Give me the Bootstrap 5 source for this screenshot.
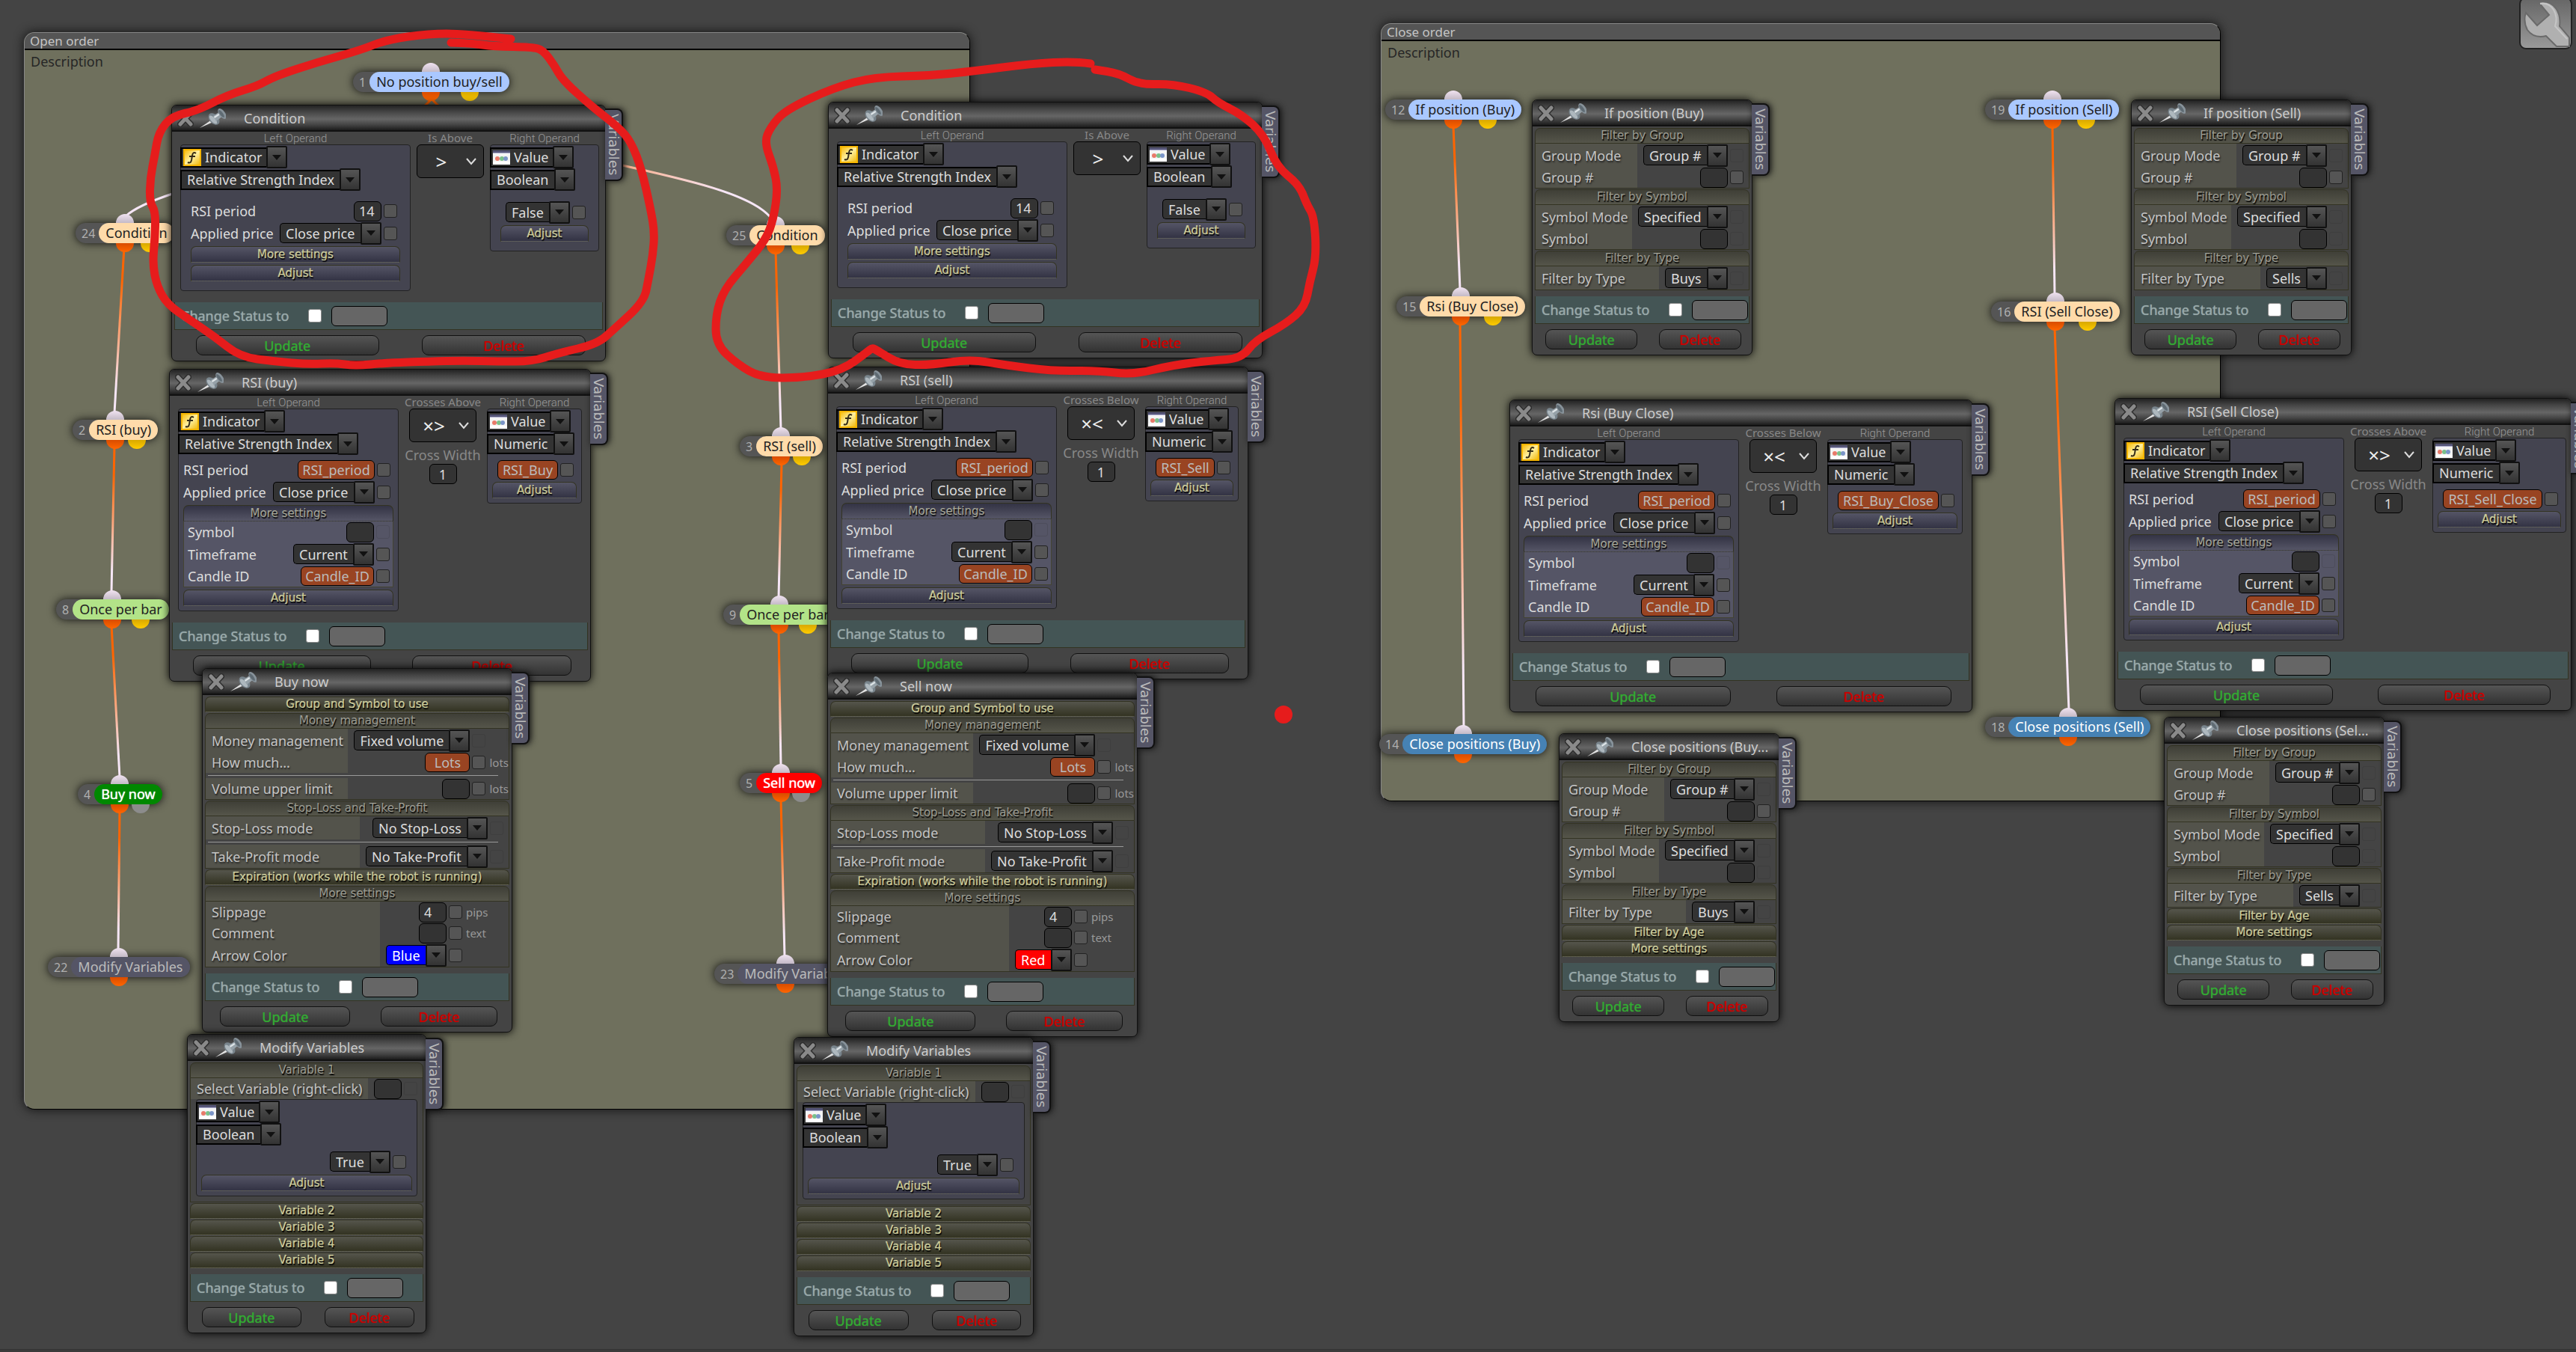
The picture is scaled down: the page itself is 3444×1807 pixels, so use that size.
<!DOCTYPE html>
<html lang="en">
<head>
<meta charset="utf-8">
<meta name="viewport" content="width=device-width, initial-scale=1">
<title>Strategy builder</title>
<link href="https://cdn.jsdelivr.net/npm/bootstrap@5.3.0/dist/css/bootstrap.min.css" rel="stylesheet">
<style>
  body { background: #444; color: #ddd; font: 18px/24px "Noto Sans", "Open Sans", sans-serif; }
  .board { min-height: 100vh; overflow: hidden; }
  .board::after { content: ""; position: absolute; inset: auto 0 0 0; height: 4px; background: #3b3b3b; border-top: 1px solid #333; }
  .layer { inset: 0; width: 100%; height: 100%; pointer-events: none; }
  .frame { background: #6f705d; border: 1px solid #000; border-top-color: #888; border-left-color: #888; border-radius: 14px 14px 0 14px; box-shadow: 0 0 14px #111; }
  .frame-head { height: 23px; background: #555; border-bottom: 2px solid #000; border-radius: 13px 13px 0 0; padding-left: 7px; font-size: 17px; line-height: 22px; color: #c4c4c4; }
  .frame-text { padding: 3px 8px; color: #262626; }

  .node { height: 27px; border-radius: 14px; background: #555; box-shadow: 0 0 12px #111; white-space: nowrap; }
  .node-id { padding: 0 5px 0 8px; font-size: 16px; color: #b0b0b0; }
  .node-name { height: 27px; line-height: 26px; padding: 0 9px; border-radius: 14px; color: #222; }
  .kind-block .node-name { background: #aac8ff; }
  .kind-test .node-name { background: #ffdbaa; }
  .kind-once .node-name { background: #b2e388; }
  .kind-buy .node-name { background: #080; color: #fff; text-shadow: 0 0 1px #fff; }
  .kind-sell .node-name { background: #f00; color: #fff; text-shadow: 0 0 1px #fff; }
  .kind-var .node-name { background: #556; color: #bbb; }
  .kind-close .node-name { background: #4682b4; color: #fff; }
  .port { width: 24px; height: 12px; margin-left: -12px; left: 50%; }
  .port-in { bottom: 100%; border-radius: 12px 12px 0 0; background: linear-gradient(#f0e2f0, #c4bac6); }
  .port-out { top: 100%; border-radius: 0 0 12px 12px; background: linear-gradient(#d84c00, #f60); }
  .port-alt { top: 100%; left: 75%; border-radius: 0 0 12px 12px; background: linear-gradient(#d8a800, #fc0); }
  .port-off { background: #8c8c8c; }

  .win { background: #444; border: 1px solid #111; border-radius: 7px; box-shadow: 0 0 12px #000; padding-bottom: 7px; }
  .win-head { height: 35px; border-bottom: 2px solid #111; border-radius: 6px 6px 0 0; padding: 0 8px 0 7px; background: linear-gradient(#222, #444 25%, #666 55%, #444 78%, #1c1c1c); color: #ccc; }
  .win-head svg { flex: none; }
  .win-title { margin-left: 24px; font-size: 18px; line-height: 34px; font-weight: 400; }
  .icon-btn { background: none; border: 0; padding: 0; line-height: 0; }
  .icon-btn + .icon-btn { margin-left: 7px; }
  .win-tab { left: 100%; top: 4px; height: 97px; width: 24px; border: 1px solid #111; border-width: 2px 2px 2px 0; border-radius: 0 8px 8px 0; background: #556; color: #bbb; box-shadow: 2px 0 8px #111; padding: 0; writing-mode: vertical-rl; font: 18px/21px "DejaVu Sans", sans-serif; }
  .win-body { padding: 2px 3px 0; }

  .fold { display: block; width: 100%; height: 21px; margin: 0 0 1px; padding: 0; border: 1px solid #332; border-bottom: 1px dotted #666650; border-radius: 7px 7px 0 0; font: 15px/19px "DejaVu Sans", sans-serif; text-align: center; background: linear-gradient(#55554c, #333322); color: #cc9; text-shadow: 1px 2px 1px #000, 0 0 1px #bb9; }
  .fold.is-open { margin: 0; background: linear-gradient(#3f3f37, #55554a); color: #9c9c92; border: 1px solid #333322; text-shadow: 1px 2px 1px #000; }
  .fold-cold { height: 22px; margin-bottom: 3px; background: linear-gradient(#556, #334); }
  .fold-cold.is-open { background: linear-gradient(#334, #556); color: #a8a898; border-bottom: 1px dotted #554; }
  .group-box { border: 1px solid #332; border-top: 0; margin-bottom: 1px; display: grid; grid-template-columns: 1fr auto; }
  .group-box.has-unit { grid-template-columns: 1fr auto auto; }
  .field-name { background: #53534b; color: #c4c4c4; padding-left: 8px; text-shadow: 1px 2px 2px #222; display: flex; align-items: center; line-height: 24px; white-space: nowrap; }
  .field-value { min-height: 28px; padding: 0 7px 0 8px; }
  .field-value .pick { height: 31px; }
  .has-unit .field-value { padding-right: 0; }
  .field-unit { color: #999; font-size: 15px; line-height: 20px; padding-left: 5px; min-width: 29px; }
  .unit-wide .field-unit { min-width: 62px; }
  .split { grid-column: 1 / -1; margin: 3px 14px 3px 3px; height: 1px; border: 0; background: #999; opacity: 1; }

  .pick { height: 30px; display: inline-flex; align-items: center; }
  .pick-face { height: 27px; background: #333; border: 1px solid #000; border-right: 0; border-radius: 5px 0 0 5px; display: flex; align-items: center; padding: 0 7px; }
  .pick-face select { appearance: none; background: none; border: 0; padding: 0; margin: 0; color: #ddd; font: inherit; line-height: 24px; outline: 0; }
  .pick-square .pick-face { border-radius: 0; border-width: 2px; }
  .pick-icon .pick-face { padding: 0 5px 0 2px; gap: 5px; }
  .pick-arrow { width: 28px; height: 30px; border: 2px solid #111; background: linear-gradient(#555, #333); display: flex; align-items: center; justify-content: center; border-radius: 2px; }
  .tone-blue .pick-face { background: #00f; }
  .tone-red .pick-face { background: #f00; }
  .tone-blue select, .tone-red select { color: #fff; }
  .entry { width: 37px; height: 27px; border: 1px solid #000; border-radius: 6px; background: #333; color: #ddd; padding: 0 6px; font: inherit; line-height: 24px; }
  .entry-var { height: 26px; background: #994422; color: #bbb; text-align: center; padding: 0; }
  .tick { appearance: none; width: 18px; height: 18px; margin: 0 0 0 3px; border: 1px solid #222; border-radius: 3px; background: #555; flex: none; }
  .tick:disabled { background: transparent; border-color: rgba(34, 34, 34, .15); }

  .caption { font: 300 15px/17px Roboto, sans-serif; color: #999; text-align: center; padding-top: 1px; height: 17px; }
  .caption-mid { font: 15px/17px "Noto Sans", sans-serif; color: #888; text-align: center; white-space: nowrap; }
  .operands { gap: 8px; padding: 0 8px; margin-top: -2px; }
  .left-side { width: 295px; flex: none; }
  .is-roomy .left-side { width: 308px; }
  .operand { background: #444450; border: 1px solid #222; border-radius: 4px; padding-top: 1px; }
  .operand .pick { margin-left: -1px; }
  .op-form { padding: 6px 6px 3px; }
  .is-roomy .op-form { padding: 13px 13px 9px; }
  .op-row { min-height: 28px; padding-right: 4px; }
  .op-row .pick { margin: 0; height: 31px; }
  .op-form > .fold { margin-top: 2px; }
  .op-form > .fold + .fold, .op-more + .fold { margin-top: 3px; }
  .op-more { background: #556; border: 1px solid #443; border-top: 0; padding-left: 5px; }
  .right-side .op-row { padding-left: 7px; justify-content: flex-end; }
  .compare { width: 90px; height: 45px; background: #333; border: 1px solid #000; border-radius: 6px; margin: 0 auto; }
  .compare select { appearance: none; width: 64px; border: 0; background: none; color: #eee; text-align: center; text-align-last: center; font: 26px/36px "Noto Sans", sans-serif; padding: 0; outline: 0; }
  .mid-label { color: #888; font-size: 18px; line-height: 22px; margin-top: 6px; white-space: nowrap; }
  .mid-side { flex: none; min-width: 90px; }
  .mid-side.is-cross { width: 102px; }

  .status { background: #455; border: 1px solid #332; border-top: 0; height: 37px; padding-left: 8px; margin-top: 8px; color: #9aa; overflow: hidden; }
  .status label { text-shadow: 0 0 1px #9aa; white-space: nowrap; }
  .status-tick { appearance: none; flex: none; width: 18px; height: 18px; margin: 0 13px 0 26px; background: #fff; border: 1px solid #888; border-radius: 3px; }
  .status-entry { flex: none; width: 75px; height: 27px; border: 1px solid #000; border-radius: 6px; background: #666; }
  .win-wide .status { margin-top: 15px; }
  .actions { padding: 7px 4% 0 5%; }
  .act { height: 27px; border: 1px solid #111; border-radius: 9px; background: linear-gradient(#555, #333); padding: 0; font: inherit; line-height: 24px; }
  .act-update { width: 47%; color: #3a3; text-shadow: 0 0 1px #3a3; }
  .act-delete { width: 42%; color: #c00; text-shadow: 0 0 1px #c00; }
  .inset-box { padding: 0 7px 7px; grid-column: 1 / -1; }
  .tools { top: -4px; right: 5px; width: 71px; height: 70px; border: 2px solid #222; border-radius: 9px; background: linear-gradient(#666, #999); padding: 0; }
</style>
</head>
<body>
<main class="board position-relative" id="board"></main>
<script src="https://cdn.jsdelivr.net/npm/bootstrap@5.3.0/dist/js/bootstrap.bundle.min.js"></script>
<script>
let serial = 0;
const nextId = () => 'f' + (++serial);

const closeIcon = `<svg width="22" height="22" viewBox="0 0 22 22"><path d="M4 4 L18 19 M18 4 L4 19" fill="none" stroke="#2e2e2e" stroke-width="8" stroke-linecap="round"/><path d="M4 4 L18 19 M18 4 L4 19" fill="none" stroke="#8a8a8a" stroke-width="5" stroke-linecap="round"/></svg>`;
const pinIcon = `<svg width="36" height="28" viewBox="0 0 36 28"><path d="M1 27 L17 16 L19 19 Z" fill="#e2e2e2"/><ellipse cx="20" cy="15" rx="6" ry="9" transform="rotate(-42 20 15)" fill="#78848c"/><ellipse cx="19" cy="16" rx="3" ry="7" transform="rotate(-42 19 16)" fill="#aeb8be"/><path d="M19 11 L28 5 L32 11 L23 18 Z" fill="#96a1a8"/><path d="M20 12 L29 6 L30 8 L21 14 Z" fill="#dfe5e8"/><ellipse cx="31" cy="8" rx="4" ry="8" transform="rotate(-36 31 8)" fill="#87929a"/><ellipse cx="30" cy="8" rx="2" ry="6" transform="rotate(-36 30 8)" fill="#5f6b73"/></svg>`;
const indicatorIcon = `<svg width="24" height="23" viewBox="0 0 24 23"><defs><linearGradient id="gold" x2="1" y2="1"><stop stop-color="#f8b800"/><stop offset=".5" stop-color="#fff0a0"/><stop offset="1" stop-color="#f0b400"/></linearGradient></defs><rect x="1" y="1" width="22" height="21" fill="url(#gold)" stroke="#f4b400" stroke-width="2"/><path d="M17 6 Q13 3 12 9 L11 15 Q10 20 6 18 M8 10 H16" fill="none" stroke="#332b18" stroke-width="2"/></svg>`;
const valueIcon = `<svg width="23" height="19" viewBox="0 0 23 19"><rect width="23" height="19" rx="1" fill="#f4f4f4"/><rect width="23" height="4" fill="#557"/><rect y="3" width="23" height="1" fill="#aac"/><circle cx="6" cy="11" r="3" fill="#e87a6a"/><circle cx="12" cy="11" r="3" fill="#79c08a"/><circle cx="17" cy="11" r="3" fill="#7b95c8"/><rect y="15" width="23" height="4" fill="#fff"/></svg>`;
const arrow = `<span class="pick-arrow"><svg width="12" height="7" viewBox="0 0 12 7"><path d="M0 0H12L6 7Z" fill="#111"/></svg></span>`;

const pick = (text, cls = '', icon = '', id = nextId()) =>
  `<span class="pick ${cls}"><span class="pick-face">${icon}<select id="${id}" aria-label="${text}"><option>${text}</option></select></span>${arrow}</span>`;
const tick = off => `<input class="tick" type="checkbox" aria-label="Use variable" ${off ? 'disabled' : ''}>`;
const entry = (id, v = '') => `<input class="entry" id="${id}" type="text" value="${v}">`;
const varEntry = (id, v, w) => `<input class="entry entry-var" id="${id}" type="text" value="${v}" style="width:${w}px">`;
const fold = (t, cls = '') => `<button type="button" class="fold ${cls}">${t}</button>`;

// control: ['pick', text, tone] | ['entry', value] | ['var', name, width]
const control = (c, id) => c[0] === 'pick' ? pick(c[1], c[2] || '', '', id) : c[0] === 'var' ? varEntry(id, c[1], c[2]) : entry(id, c[1]);

const opRow = (label, c, off) => {
  const id = nextId();
  return `<div class="op-row d-flex align-items-center">${label ? `<label class="me-auto pe-2 text-nowrap" for="${id}">${label}</label>` : ''}${control(c, id)}${tick(off)}</div>`;
};
const operand = (kind, type, form) => {
  const first = kind === 'Indicator' ? pick('Indicator', 'pick-square pick-icon', indicatorIcon) : pick('Value', 'pick-square pick-icon', valueIcon);
  return `<div class="operand d-flex flex-column align-items-start">${first}${pick(type, 'pick-square')}<div class="op-form w-100">${form}</div></div>`;
};

const leftForm = full => full
  ? opRow('RSI period', ['var', 'RSI_period', 103]) + opRow('Applied price', ['pick', 'Close price']) +
    fold('More settings', 'fold-cold is-open mb-0') +
    `<div class="op-more">${opRow('Symbol', ['entry', ''], true)}${opRow('Timeframe', ['pick', 'Current'])}${opRow('Candle ID', ['var', 'Candle_ID', 98])}</div>` +
    fold('Adjust', 'fold-cold')
  : opRow('RSI period', ['entry', '14']) + opRow('Applied price', ['pick', 'Close price']) + fold('More settings', 'fold-cold') + fold('Adjust', 'fold-cold');

const compareBody = o => {
  const wid = nextId();
  return `<div class="operands d-flex align-items-start ${o.full ? '' : 'is-roomy'}">
    <div class="left-side"><div class="caption">Left Operand</div>${operand('Indicator', 'Relative Strength Index', leftForm(o.full))}</div>
    <div class="mid-side ${o.full ? 'is-cross' : ''} text-center"><div class="caption-mid">${o.mode}</div>
      <div class="compare d-flex align-items-center"><select aria-label="${o.mode}"><option>${o.sign}</option></select><svg width="16" height="12" viewBox="0 0 16 12"><path d="M2 2 L8 9 L14 2" fill="none" stroke="#ddd" stroke-width="2"/></svg></div>
      ${o.full ? `<label class="mid-label" for="${wid}">Cross Width</label><div><input class="entry text-center" id="${wid}" type="text" value="1"></div>` : ''}
    </div>
    <div class="right-side"><div class="caption">Right Operand</div>${operand('Value', o.type, opRow('', o.right) + fold('Adjust', 'fold-cold'))}</div>
  </div>`;
};

// section: {t: title, rows: [[label, control, ghostTick, unit] | '-'], units: class}
const section = s => {
  if (!s.rows) return fold(s.t);
  const rows = s.rows.map(r => {
    if (r === '-') return '<hr class="split">';
    const id = nextId();
    return `<label class="field-name" for="${id}">${r[0]}</label><div class="field-value d-flex align-items-center justify-content-end">${control(r[1], id)}${tick(r[2])}</div>` +
      (s.units ? `<div class="field-unit d-flex align-items-center">${r[3] || ''}</div>` : '');
  }).join('');
  return fold(s.t, 'is-open') + `<div class="group-box ${s.units || ''}">${rows}${s.extra || ''}</div>`;
};

const filters = (type, more) => [
  {t: 'Filter by Group', rows: [['Group Mode', ['pick', 'Group #'], true], ['Group #', ['entry', '']]]},
  {t: 'Filter by Symbol', rows: [['Symbol Mode', ['pick', 'Specified'], true], ['Symbol', ['entry', ''], true]]},
  {t: 'Filter by Type', rows: [['Filter by Type', ['pick', type], true]]},
  ...(more ? [{t: 'Filter by Age'}, {t: 'More settings'}] : [])
];
const trade = (color, tone) => [
  {t: 'Group and Symbol to use'},
  {t: 'Money management', units: 'has-unit', rows: [['Money management', ['pick', 'Fixed volume'], true], ['How much...', ['var', 'Lots', 60], false, 'lots'], '-', ['Volume upper limit', ['entry', ''], false, 'lots']]},
  {t: 'Stop-Loss and Take-Profit', rows: [['Stop-Loss mode', ['pick', 'No Stop-Loss'], true], '-', ['Take-Profit mode', ['pick', 'No Take-Profit'], true]]},
  {t: 'Expiration (works while the robot is running)'},
  {t: 'More settings', units: 'has-unit unit-wide', rows: [['Slippage', ['entry', '4'], false, 'pips'], ['Comment', ['entry', ''], false, 'text'], ['Arrow Color', ['pick', color, tone]]]}
];
const modify = () => [
  {t: 'Variable 1', rows: [['Select Variable (right-click)', ['entry', ''], true]],
   extra: `<div class="inset-box">${operand('Value', 'Boolean', `<div class="d-flex justify-content-end pe-1">${opRow('', ['pick', 'True'])}</div>` + fold('Adjust', 'fold-cold'))}</div>`},
  {t: 'Variable 2'}, {t: 'Variable 3'}, {t: 'Variable 4'}, {t: 'Variable 5'}
];

const rsi = (mode, sign, name, w) => ({full: true, mode, sign, type: 'Numeric', right: ['var', name, w]});
const cond = {full: false, mode: 'Is Above', sign: '&gt;', type: 'Boolean', right: ['pick', 'False']};

const windows = [
  {x: 229, y: 140, w: 581, title: 'Condition', cmp: cond},
  {x: 1107, y: 136, w: 581, title: 'Condition', cmp: cond},
  {x: 226, y: 493, w: 564, title: 'RSI (buy)', cmp: rsi('Crosses Above', '×&gt;', 'RSI_Buy', 81)},
  {x: 1106, y: 490, w: 563, title: 'RSI (sell)', cmp: rsi('Crosses Below', '×&lt;', 'RSI_Sell', 79)},
  {x: 270, y: 893, w: 415, title: 'Buy now', parts: trade('Blue', 'tone-blue')},
  {x: 1106, y: 899, w: 415, title: 'Sell now', parts: trade('Red', 'tone-red')},
  {x: 250, y: 1382, w: 320, title: 'Modify Variables', parts: modify()},
  {x: 1061, y: 1386, w: 321, title: 'Modify Variables', parts: modify()},
  {x: 2048, y: 133, w: 295, title: 'If position (Buy)', parts: filters('Buys')},
  {x: 2849, y: 133, w: 295, title: 'If position (Sell)', parts: filters('Sells')},
  {x: 2018, y: 534, w: 619, title: 'Rsi (Buy Close)', cmp: rsi('Crosses Below', '×&lt;', 'RSI_Buy_Close', 135)},
  {x: 2827, y: 532, w: 611, title: 'RSI (Sell Close)', cmp: rsi('Crosses Above', '×&gt;', 'RSI_Sell_Close', 133)},
  {x: 2084, y: 980, w: 295, title: 'Close positions (Buy...', parts: filters('Buys', true)},
  {x: 2893, y: 958, w: 295, title: 'Close positions (Sel...', parts: filters('Sells', true)}
];
const nodes = [
  [1, 472, 96, 'No position buy/sell', 'block', 1], [24, 101, 298, 'Condition', 'test', 1], [2, 97, 561, 'RSI (buy)', 'test', 1],
  [8, 75, 801, 'Once per bar', 'once', 1], [4, 104, 1048, 'Buy now', 'buy', 2], [22, 64, 1279, 'Modify Variables', 'var', 0],
  [25, 971, 301, 'Condition', 'test', 1], [3, 989, 583, 'RSI (sell)', 'test', 1], [9, 967, 808, 'Once per bar', 'once', 1],
  [5, 989, 1033, 'Sell now', 'sell', 2], [23, 955, 1288, 'Modify Variables', 'var', 0],
  [12, 1852, 133, 'If position (Buy)', 'block', 1], [15, 1867, 396, 'Rsi (Buy Close)', 'test', 1], [14, 1844, 981, 'Close positions (Buy)', 'close', 0],
  [19, 2654, 133, 'If position (Sell)', 'block', 1], [16, 2662, 403, 'RSI (Sell Close)', 'test', 1], [18, 2654, 958, 'Close positions (Sell)', 'close', 0]
];
const frames = [
  {x: 32, y: 43, w: 1265, h: 1440, t: 'Open order'},
  {x: 1846, y: 31, w: 1123, h: 1040, t: 'Close order'}
];
const links = [
  [166, 330, 153, 552], [153, 595, 149, 792], [149, 835, 160, 1039], [160, 1082, 158, 1270],
  [1037, 335, 1044, 574], [1045, 618, 1041, 800], [1041, 842, 1044, 1024], [1044, 1068, 1049, 1279],
  [1943, 168, 1952, 387], [1952, 431, 1957, 972], [2744, 168, 2747, 394], [2747, 438, 2766, 949],
  [577, 132, 168, 289, 'C520 205 220 240'], [577, 132, 1032, 293, 'C640 210 985 225']
];
const marks = [
  [683,52,620,45,574,45,517,53,482,67,425,83,367,102,344,115,304,127,264,148,230,155,212,177,207,207,201,237,200,270,208,283,207,320,204,353,210,383,224,407,253,427,287,450,321,477,367,483,413,487,448,485,474,489,517,485,574,483,620,482,666,483,712,483,746,472,798,460,821,440,861,403,867,373,873,340,875,310,870,280,858,227,844,190,827,170,792,143,752,107,741,87,726,67,712,63,660,62,631,58,603,57],
  [1458,85,1437,82,1379,85,1302,95,1244,101,1168,103,1115,117,1050,147,1030,170,1022,190,1034,223,1040,253,1034,293,1024,320,997,353,968,387,957,420,957,460,986,487,1018,505,1074,505,1126,495,1160,470,1166,465,1172,468,1203,487,1244,488,1297,480,1344,488,1408,496,1467,495,1514,501,1567,488,1619,482,1660,479,1678,455,1719,433,1745,410,1751,377,1760,343,1757,290,1747,273,1737,247,1707,223,1690,180,1660,153,1628,137,1613,123,1567,112,1523,113,1496,98,1464,93]
];

// Freehand stroke: quadratic curves through the midpoints of the sampled points
const stroke = p => {
  let d = `M${p[0]} ${p[1]}`;
  for (let i = 2; i < p.length - 2; i += 2) d += ` Q${p[i]} ${p[i + 1]} ${(p[i] + p[i + 2]) / 2} ${(p[i + 1] + p[i + 3]) / 2}`;
  return d + ` L${p[p.length - 2]} ${p[p.length - 1]}`;
};

const frameHtml = frames.map(f => `<section class="frame position-absolute" style="left:${f.x}px;top:${f.y}px;width:${f.w}px;height:${f.h}px"><div class="frame-head">${f.t}</div><div class="frame-text">Description</div></section>`).join('');
const linkHtml = `<svg class="layer position-absolute"><defs>${links.map((l, i) => `<linearGradient id="g${i}" gradientUnits="userSpaceOnUse" x1="${l[0]}" y1="${l[1]}" x2="${l[2]}" y2="${l[3]}"><stop offset=".2" stop-color="#ff6400"/><stop offset=".85" stop-color="#f6e6f6"/></linearGradient>`).join('')}</defs>${links.map((l, i) => `<path d="M${l[0]} ${l[1]} ${l[4] || 'L'} ${l[2]} ${l[3]}" fill="none" stroke="url(#g${i})" stroke-width="3"/>`).join('')}</svg>`;
const nodeHtml = nodes.map(n => `<div class="node kind-${n[4]} position-absolute d-flex align-items-center" style="left:${n[1]}px;top:${n[2]}px"><span class="port port-in position-absolute"></span><span class="port port-out position-absolute"></span>${n[5] ? `<span class="port port-alt ${n[5] === 2 ? 'port-off' : ''} position-absolute"></span>` : ''}<span class="node-id">${n[0]}</span><span class="node-name">${n[3]}</span></div>`).join('');
const windowHtml = windows.map(w => {
  const a = nextId();
  return `<section class="win ${w.cmp ? 'win-wide' : ''} position-absolute" style="left:${w.x}px;top:${w.y}px;width:${w.w}px">
    <header class="win-head d-flex align-items-center"><button type="button" class="icon-btn" aria-label="Close">${closeIcon}</button><button type="button" class="icon-btn" aria-label="Pin">${pinIcon}</button><h2 class="win-title mb-0 text-nowrap">${w.title}</h2></header>
    <button type="button" class="win-tab position-absolute">Variables</button>
    <div class="win-body">${w.cmp ? compareBody(w.cmp) : w.parts.map(section).join('')}
      <div class="status d-flex align-items-center"><label for="${a}">Change Status to</label><input class="status-tick" id="${a}" type="checkbox"><input class="status-entry" type="text" aria-label="Status value"></div>
      <div class="actions d-flex justify-content-between"><button type="button" class="act act-update">Update</button><button type="button" class="act act-delete">Delete</button></div>
    </div></section>`;
}).join('');
const toolHtml = `<button type="button" class="tools position-absolute" aria-label="Tools"><svg width="67" height="66" viewBox="0 0 67 66"><path d="M24 5 Q38 2 47 13 Q54 23 52 37 L65 52 V64 H48 L34 50 Q18 54 9 42 Q3 30 7 19 L22 36 L38 22 Z" fill="#b0b0b0" stroke="#6a6a6a" stroke-width="2"/><path d="M26 7 Q38 5 44 15 Q50 25 46 37 L62 54" fill="none" stroke="#c6c6c6" stroke-width="2"/></svg></button>`;
const markHtml = `<svg class="layer position-absolute">${marks.map(m => `<path d="${stroke(m)}" fill="none" stroke="#e61c1c" stroke-width="11" stroke-linecap="round" stroke-linejoin="round"/>`).join('')}<circle cx="1716" cy="955" r="12" fill="#e61c1c"/></svg>`;
document.getElementById('board').innerHTML = frameHtml + linkHtml + nodeHtml + windowHtml + toolHtml + markHtml;
</script>
</body>
</html>
